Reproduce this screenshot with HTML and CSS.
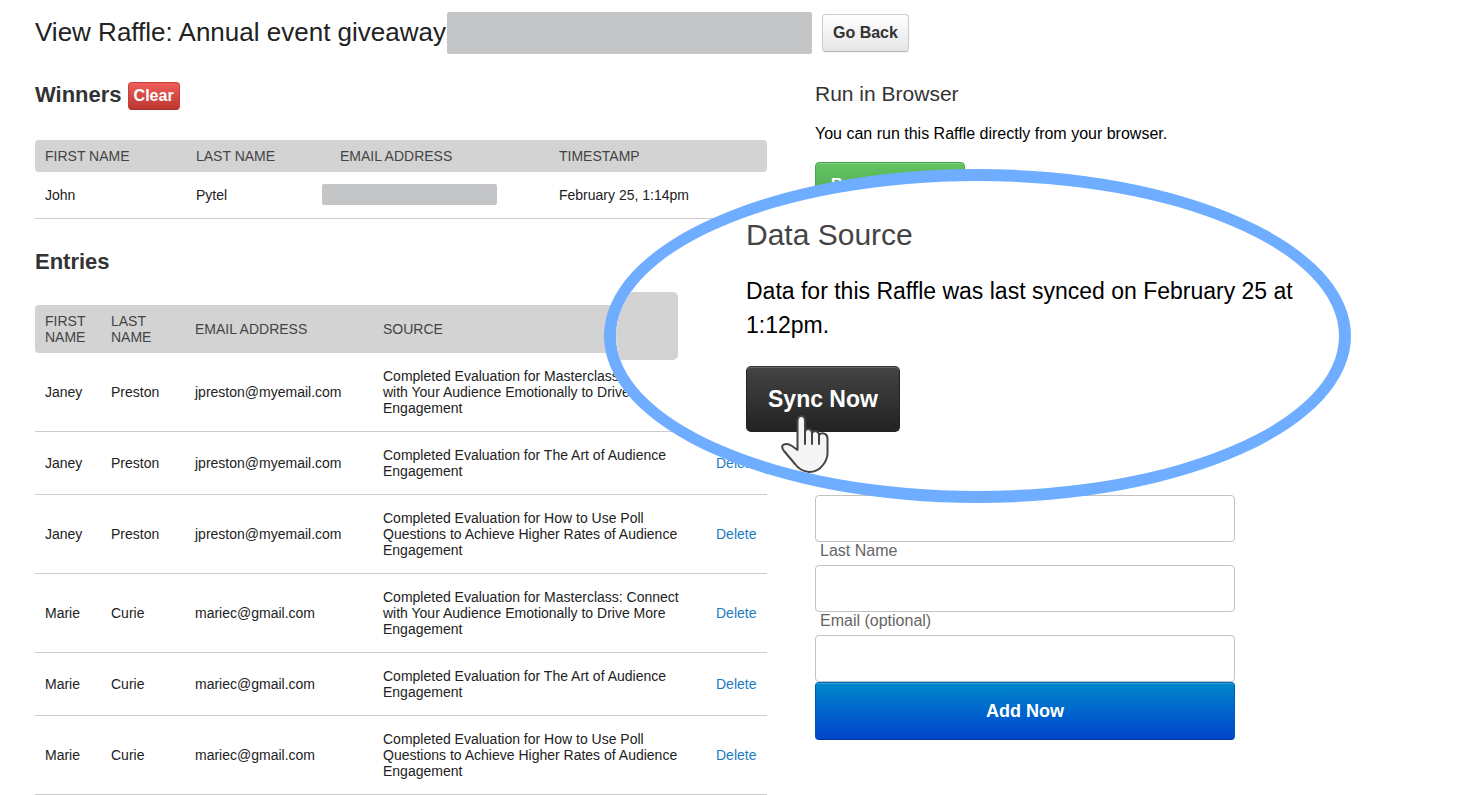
FILE: index.html
```html
<!DOCTYPE html>
<html lang="en">
<head>
    <meta charset="UTF-8">
    <title>View Raffle</title>
    <link rel="stylesheet" href="styles.css">
</head>
<body>
<div class="page">
    <!-- title bar -->
    <div class="page-head">
        <h1>View Raffle: Annual event giveaway</h1>
        <span class="redacted redacted-title"></span>
        <button type="button" class="btn btn-default">Go Back</button>
    </div>

    <div class="columns">
        <div class="main">
            <!-- winners -->
            <div class="section-head">
                <h2>Winners</h2>
                <button type="button" class="btn btn-danger">Clear</button>
            </div>
            <table class="list winners">
                <thead>
                    <tr>
                        <th class="w-first">First Name</th>
                        <th class="w-last">Last Name</th>
                        <th class="w-email">Email Address</th>
                        <th>Timestamp</th>
                    </tr>
                </thead>
                <tbody>
                    <tr>
                        <td>John</td>
                        <td>Pytel</td>
                        <td class="cell-redacted"><span class="redacted redacted-email"></span></td>
                        <td>February 25, 1:14pm</td>
                    </tr>
                </tbody>
            </table>

            <!-- entries -->
            <div class="section-head section-head-entries">
                <h2>Entries</h2>
            </div>
            <table class="list entries">
                <thead>
                    <tr>
                        <th class="e-first">First Name</th>
                        <th class="e-last">Last Name</th>
                        <th class="e-email">Email Address</th>
                        <th>Source</th>
                        <th class="e-action"></th>
                    </tr>
                </thead>
                <tbody>
                    <tr>
                        <td>Janey</td>
                        <td>Preston</td>
                        <td>jpreston@myemail.com</td>
                        <td>Completed Evaluation for Masterclass: Connect with Your Audience Emotionally to Drive More Engagement</td>
                        <td><a href="#">Delete</a></td>
                    </tr>
                    <tr>
                        <td>Janey</td>
                        <td>Preston</td>
                        <td>jpreston@myemail.com</td>
                        <td>Completed Evaluation for The Art of Audience Engagement</td>
                        <td><a href="#">Delete</a></td>
                    </tr>
                    <tr>
                        <td>Janey</td>
                        <td>Preston</td>
                        <td>jpreston@myemail.com</td>
                        <td>Completed Evaluation for How to Use Poll Questions to Achieve Higher Rates of Audience Engagement</td>
                        <td><a href="#">Delete</a></td>
                    </tr>
                    <tr>
                        <td>Marie</td>
                        <td>Curie</td>
                        <td>mariec@gmail.com</td>
                        <td>Completed Evaluation for Masterclass: Connect with Your Audience Emotionally to Drive More Engagement</td>
                        <td><a href="#">Delete</a></td>
                    </tr>
                    <tr>
                        <td>Marie</td>
                        <td>Curie</td>
                        <td>mariec@gmail.com</td>
                        <td>Completed Evaluation for The Art of Audience Engagement</td>
                        <td><a href="#">Delete</a></td>
                    </tr>
                    <tr>
                        <td>Marie</td>
                        <td>Curie</td>
                        <td>mariec@gmail.com</td>
                        <td>Completed Evaluation for How to Use Poll Questions to Achieve Higher Rates of Audience Engagement</td>
                        <td><a href="#">Delete</a></td>
                    </tr>
                </tbody>
            </table>
        </div>

        <div class="side">
            <h3>Run in Browser</h3>
            <p>You can run this Raffle directly from your browser.</p>
            <button type="button" class="btn btn-success">Run in Browser</button>

            <form class="add-form">
                <label for="first-name">First Name</label>
                <input type="text" id="first-name">
                <label for="last-name">Last Name</label>
                <input type="text" id="last-name">
                <label for="email">Email (optional)</label>
                <input type="email" id="email">
                <button type="submit" class="btn btn-primary">Add Now</button>
            </form>
        </div>
    </div>

    <!-- magnified callout over the page -->
    <div class="lens">
        <div class="lens-strip"></div>
        <div class="lens-body">
            <h3>Data Source</h3>
            <p>Data for this Raffle was last synced on February 25 at 1:12pm.</p>
            <button type="button" class="btn btn-dark">Sync Now</button>
        </div>
        <svg class="hand" viewBox="0 0 50 60" width="50" height="60" aria-hidden="true">
            <path d="M17.500 7 Q17.500 2 21.500 2 Q25 2 25 7 V17 Q27 14 30 15.500 Q32 16.500 32 19 Q34 16 37 17.500 Q39 18.500 39 21 Q42 18 45 20 Q47.500 21 47.500 25 V40 Q47 46 43 51 Q38 58 29 58 Q20 57 15 50 L4 37 Q1 33 3 31 Q7 28.500 12 32 L17.500 36 Z" fill="#f5f5f5" stroke="#444" stroke-width="2" stroke-linejoin="round"/>
            <path d="M25 16 V30 M32 18 V30 M39 20 V30" fill="none" stroke="#444" stroke-width="2" stroke-linecap="round"/>
        </svg>
    </div>
</div>
</body>
</html>
```
FILE: styles.css
```css
* {
    box-sizing: border-box;
}
body {
    margin: 0;
    background: #fff;
    color: #000;
    font-family: "Liberation Sans", Arial, sans-serif;
    font-size: 16px;
}
h1, h2, h3, p {
    margin: 0;
}
.page {
    position: relative;
    max-width: 1235px;
    padding: 12px 0 0 35px;
}

/* title bar */
.page-head {
    display: flex;
    align-items: center;
    height: 42px;
    margin-bottom: 28px;
}
.page-head h1 {
    color: #222;
    font-size: 26px;
    font-weight: normal;
    line-height: 40px;
    white-space: nowrap;
    padding-bottom: 2px;
}
.redacted {
    display: block;
    background: #c4c5c7;
    border-radius: 2px;
}
.redacted-title {
    width: 365px;
    height: 42px;
    margin: 0 10px 0 1px;
}
.redacted-email {
    width: 175px;
    height: 21px;
    margin-left: -8px;
}

/* buttons */
.btn {
    border: 1px solid;
    border-radius: 4px;
    font-family: inherit;
    font-size: 16px;
    font-weight: bold;
    cursor: pointer;
}
.btn-default {
    height: 38px;
    padding: 0 10px;
    color: #333;
    border-color: #ccc #ccc #b3b3b3;
    background: linear-gradient(#fff, #e6e6e6);
    box-shadow: 0 1px 2px rgba(0, 0, 0, .05);
}
.btn-danger {
    height: 28px;
    padding: 0 5px;
    color: #fff;
    border-color: #c9403b #c9403b #a52f2a;
    background: linear-gradient(#ee5f5b, #bd362f);
}
.btn-success {
    height: 46px;
    padding: 0 15px;
    color: #fff;
    border-color: #4ca64c;
    background: linear-gradient(#62c462, #51a351);
    box-shadow: inset 0 1px 0 rgba(255, 255, 255, .2);
}
.btn-primary {
    width: 100%;
    height: 58px;
    color: #fff;
    font-size: 18px;
    border-color: #0067b0 #0055b8 #0038a0;
    background: linear-gradient(#08c, #04c);
    box-shadow: inset 0 1px 0 rgba(255, 255, 255, .2);
}
.btn-dark {
    height: 66px;
    padding: 0 21px;
    color: #fff;
    font-size: 23px;
    border-color: #333 #222 #222;
    border-radius: 5px;
    background: linear-gradient(#444, #222);
    box-shadow: inset 0 1px 0 rgba(255, 255, 255, .2);
}

.columns {
    display: grid;
    grid-template-columns: 61fr 35fr;
    gap: 48px;
}

/* tables */
.section-head {
    display: flex;
    align-items: center;
    gap: 6px;
    height: 28px;
    margin-bottom: 30px;
}
.section-head-entries {
    margin-bottom: 28px;
}
.section-head h2 {
    color: #333;
    font-size: 22px;
    line-height: 26px;
    padding-bottom: 2px;
}
.list {
    width: 100%;
    table-layout: fixed;
    border-collapse: separate;
    border-spacing: 0;
    font-size: 14px;
    line-height: 16px;
    color: #222;
}
.list th {
    padding: 8px 10px;
    background: #d3d3d3;
    color: #444;
    font-weight: normal;
    text-align: left;
    text-transform: uppercase;
}
.list th:first-child {
    border-radius: 4px 0 0 4px;
}
.list th:last-child {
    border-radius: 0 4px 4px 0;
}
.list td {
    padding: 15px 10px;
    border-bottom: 1px solid #ccc;
}
.list .cell-redacted {
    padding: 12px 0 13px;
}
.list a {
    color: #1c7bbf;
    text-decoration: none;
}
.winners {
    margin-bottom: 30px;
}
.w-first { width: 151px; }
.w-last { width: 144px; }
.w-email { width: 219px; }
.e-first { width: 66px; }
.e-last { width: 84px; }
.e-email { width: 188px; }
.e-action { width: 61px; }

/* right column */
.side h3 {
    color: #333;
    font-size: 21px;
    font-weight: normal;
    line-height: 24px;
    margin-bottom: 16px;
}
.side p {
    line-height: 24px;
    margin-bottom: 16px;
}
.add-form {
    display: flex;
    flex-direction: column;
    margin-top: 264px;
}
.add-form label {
    padding-left: 5px;
    color: #666;
    line-height: 17px;
    padding-bottom: 6px;
}
.add-form input {
    width: 100%;
    height: 47px;
    padding: 0 12px;
    border: 1px solid #c2c2c2;
    border-radius: 4px;
    font: inherit;
}

/* magnified callout */
.lens {
    position: absolute;
    top: 169px;
    left: 604px;
    width: 747px;
    height: 334px;
    overflow: hidden;
    background: #fff;
    border: 12px solid #6eadff;
    border-radius: 50%;
}
.lens-strip {
    position: absolute;
    top: 111px;
    left: 0;
    width: 62px;
    height: 68px;
    background: #d3d3d3;
    border-radius: 0 5px 5px 0;
}
.lens-body {
    padding: 37px 40px 0 130px;
}
.lens-body h3 {
    color: #444;
    font-size: 30px;
    font-weight: normal;
    line-height: 34px;
    margin-bottom: 22px;
}
.lens-body p {
    font-size: 23px;
    line-height: 34px;
    margin-bottom: 24px;
}
.hand {
    position: absolute;
    top: 233px;
    left: 164px;
}
```
